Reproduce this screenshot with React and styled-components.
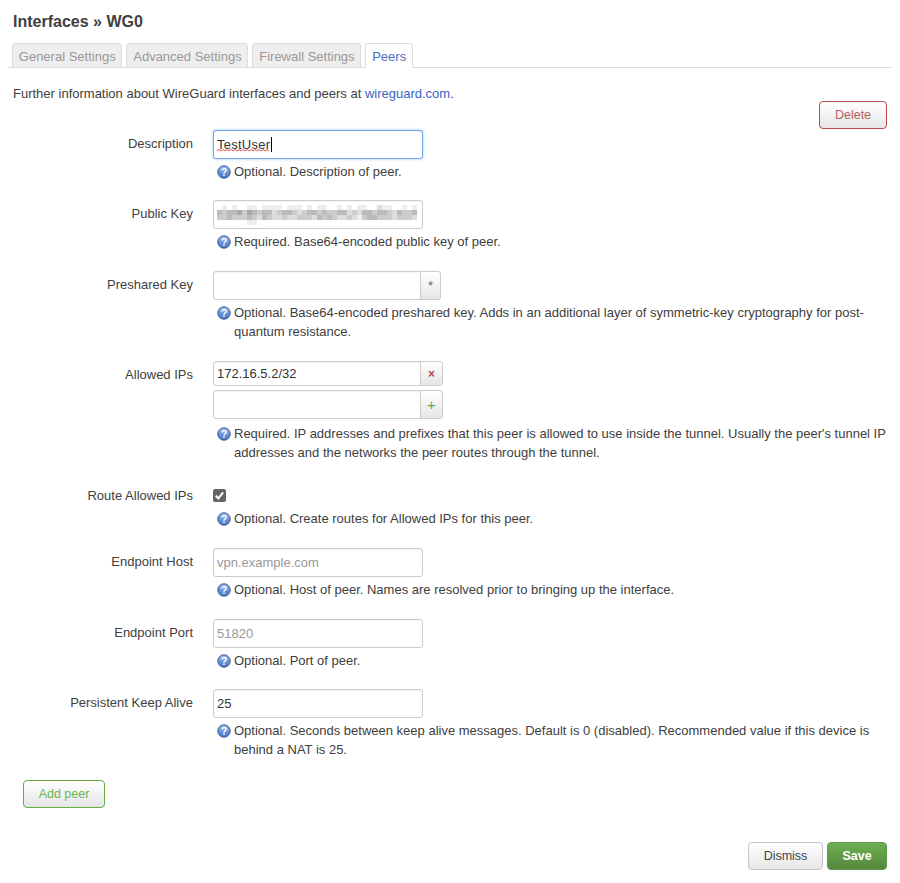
import React from "react";
import styled, { createGlobalStyle } from "styled-components";

const GlobalStyle = createGlobalStyle`
  html, body {
    margin: 0;
    padding: 0;
    background: #fff;
  }
  body {
    font-family: "Liberation Sans", Arial, sans-serif;
    font-size: 13px;
    color: #404040;
  }
`;

const Page = styled.div`
  width: 900px;
  height: 883px;
  box-sizing: border-box;
  padding: 13px 8px 0;
  overflow: hidden;
`;

const Title = styled.h2`
  margin: 0 0 13px 5px;
  font-size: 16px;
  line-height: 17px;
  font-weight: bold;
  color: #404040;
`;

const Tabs = styled.ul`
  display: flex;
  gap: 4px;
  list-style: none;
  margin: 0 0 17px;
  padding: 0 0 0 4px;
  height: 24px;
  border-bottom: 1px solid #ddd;
`;

const Tab = styled.li`
  box-sizing: border-box;
  height: 25px;
  padding: 0 5.8px;
  line-height: 25px;
  border: 1px solid #ddd;
  border-bottom-color: ${(p) => (p.$active ? "#fff" : "#ddd")};
  border-radius: 3px 3px 0 0;
  background: ${(p) => (p.$active ? "#fff" : "#eee")};
  color: ${(p) => (p.$active ? "#4a6fc3" : "#999")};
`;

const Intro = styled.p`
  margin: 0 0 0 5px;
  line-height: 17px;
`;

const Link = styled.a`
  color: #3a62c4;
  text-decoration: none;
`;

const DeleteRow = styled.div`
  display: flex;
  justify-content: flex-end;
  margin: -1px 5px 1px 0;
`;

const Button = styled.button`
  box-sizing: border-box;
  height: 28px;
  padding: 0;
  border-radius: 4px;
  font: 12.5px "Liberation Sans", Arial, sans-serif;
  background: linear-gradient(#fff, #e6e6e6);
  border: 1px solid #c4c4c4;
  color: #444;
`;

const DeleteButton = styled(Button)`
  width: 68px;
  border-color: #b94a48;
  color: #b9605e;
`;

const AddButton = styled(Button)`
  width: 82px;
  border-color: #62ad45;
  color: #6cb350;
`;

const SaveButton = styled(Button)`
  width: 60px;
  font-weight: bold;
  border-color: #5b9a48;
  background: linear-gradient(#6eae50, #55883f);
  color: #fff;
`;

const DismissButton = styled(Button)`
  width: 75px;
`;

const Form = styled.div`
  display: flex;
  flex-direction: column;
`;

const Row = styled.div`
  display: grid;
  grid-template-columns: 185px 1fr;
  column-gap: 20px;
  min-height: ${(p) => p.$height}px;
`;

const Label = styled.label`
  text-align: right;
  line-height: 28.5px;
  color: #404040;
`;

const Field = styled.div`
  display: flex;
  flex-direction: column;
  min-width: 0;
`;

const InputGroup = styled.div`
  position: relative;
  display: flex;
  width: ${(p) => (p.$wide ? 230 : p.$medium ? 228 : 210)}px;
  height: ${(p) => (p.$short ? 25 : 29)}px;
  margin-bottom: ${(p) => p.$after || 0}px;
`;

const Input = styled.input`
  box-sizing: border-box;
  flex: 1;
  min-width: 0;
  height: 100%;
  padding: 0 3px;
  font: 13px "Liberation Sans", Arial, sans-serif;
  color: #333;
  background: #fff;
  border: 1px solid #ccc;
  border-radius: ${(p) => (p.$joined ? "3px 0 0 3px" : "3px")};
  box-shadow: inset 0 1px 1px rgba(0, 0, 0, 0.05);
  outline: none;

  &::placeholder {
    color: #999;
    opacity: 1;
  }
`;

const FocusInput = styled(Input)`
  border-color: rgba(82, 148, 236, 0.8);
  box-shadow: inset 0 1px 1px rgba(0, 0, 0, 0.05), 0 0 3px rgba(82, 168, 236, 0.6);
  letter-spacing: 0.25px;
`;

const Caret = styled.span`
  position: absolute;
  left: 58px;
  top: 7px;
  width: 1px;
  height: 15px;
  background: #000;
`;

const Squiggle = styled.svg`
  position: absolute;
  left: 4px;
  top: 19px;
`;

const Addon = styled.span`
  box-sizing: border-box;
  width: ${(p) => p.$width || 21}px;
  height: 100%;
  margin-left: -1px;
  display: flex;
  align-items: center;
  justify-content: center;
  border: 1px solid #ccc;
  border-radius: 0 3px 3px 0;
  background: linear-gradient(#fff, #e6e6e6);
  font-size: ${(p) => p.$size || 13}px;
  font-weight: ${(p) => p.$weight || "normal"};
  color: ${(p) => p.$color || "#666"};
`;

const BlurredKey = styled.svg`
  position: absolute;
  left: 4px;
  top: 5px;
`;

const CheckWrap = styled.div`
  box-sizing: border-box;
  height: 24px;
  padding-top: 7px;
`;

const Checkbox = styled.svg`
  display: block;
`;

const Hint = styled.div`
  display: flex;
  align-items: flex-start;
  gap: 3px;
  padding: 4px 0 0 4px;
  width: 674px;
  line-height: 18.5px;
  font-size: 13px;
  color: #404040;
`;

const HintIcon = styled.svg`
  flex: none;
  margin-top: 2px;
`;

const HintText = styled.span`
  flex: 1;
`;

const AddRow = styled.div`
  padding-left: 15px;
`;

const Footer = styled.div`
  display: flex;
  justify-content: flex-end;
  gap: 4px;
  margin: 34px 5px 0 0;
`;

// blurred public key, one hex grey per 5px cell
const MOSAIC = [
  "fefeffeefeeeefeeefefeeffefefeeffdeeffefe",
  "bcbbacabcbbdcbbcdcbbcbccbbdcdbbcbbcdbccb",
  "ccbcccbcdbcddcddcccdbcbcddcdecbbcccdcccd",
  "ffffffeeffffffffffffffffffffffffffffffff",
];

const HelpIcon = () => (
  <HintIcon width="14" height="14" viewBox="0 0 14 14">
    <defs>
      <linearGradient id="helpFill" x1="0" y1="0" x2="0" y2="1">
        <stop offset="0" stopColor="#9cc0f0" />
        <stop offset="1" stopColor="#3f73c8" />
      </linearGradient>
    </defs>
    <circle cx="7" cy="7" r="6.2" fill="url(#helpFill)" stroke="#33558f" />
    <text x="7" y="10.5" textAnchor="middle" fontSize="10" fontWeight="bold" fill="#fff" fontFamily="Liberation Sans">
      ?
    </text>
  </HintIcon>
);

const Help = ({ children }) => (
  <Hint>
    <HelpIcon />
    <HintText>{children}</HintText>
  </Hint>
);

const App = () => (
  <Page>
    <GlobalStyle />
    <Title>Interfaces » WG0</Title>
    <Tabs>
      <Tab>General Settings</Tab>
      <Tab>Advanced Settings</Tab>
      <Tab>Firewall Settings</Tab>
      <Tab $active>Peers</Tab>
    </Tabs>
    <Intro>
      Further information about WireGuard interfaces and peers at <Link>wireguard.com</Link>.
    </Intro>
    <DeleteRow>
      <DeleteButton>Delete</DeleteButton>
    </DeleteRow>
    <Form>
      <Row $height={70}>
        <Label>Description</Label>
        <Field>
          <InputGroup>
            <FocusInput defaultValue="TestUser" spellCheck={false} />
            <Caret />
            <Squiggle width="52" height="3" viewBox="0 0 52 3">
              <path
                d="M0 2 L2 0.5 L4 2 L6 0.5 L8 2 L10 0.5 L12 2 L14 0.5 L16 2 L18 0.5 L20 2 L22 0.5 L24 2 L26 0.5 L28 2 L30 0.5 L32 2 L34 0.5 L36 2 L38 0.5 L40 2 L42 0.5 L44 2 L46 0.5 L48 2 L50 0.5 L52 2"
                fill="none"
                stroke="#d9483b"
                strokeWidth="0.9"
              />
            </Squiggle>
          </InputGroup>
          <Help>Optional. Description of peer.</Help>
        </Field>
      </Row>
      <Row $height={71}>
        <Label>Public Key</Label>
        <Field>
          <InputGroup>
            <Input />
            <BlurredKey width="200" height="20" viewBox="0 0 200 20">
              {MOSAIC.map((line, y) =>
                line.split("").map((c, x) => (
                  <rect key={`${x}-${y}`} x={x * 5} y={y * 5} width="5" height="5" fill={`#${c}${c}${c}${c}${c}${c}`} />
                ))
              )}
            </BlurredKey>
          </InputGroup>
          <Help>Required. Base64-encoded public key of peer.</Help>
        </Field>
      </Row>
      <Row $height={90}>
        <Label>Preshared Key</Label>
        <Field>
          <InputGroup $medium>
            <Input $joined />
            <Addon>*</Addon>
          </InputGroup>
          <Help>
            Optional. Base64-encoded preshared key. Adds in an additional layer of symmetric-key cryptography for
            post-quantum resistance.
          </Help>
        </Field>
      </Row>
      <Row $height={121}>
        <Label>Allowed IPs</Label>
        <Field>
          <InputGroup $wide $short $after={4}>
            <Input $joined defaultValue="172.16.5.2/32" />
            <Addon $width={23} $color="#b94a48" $weight="bold" $size={12}>×</Addon>
          </InputGroup>
          <InputGroup $wide $after={2}>
            <Input $joined />
            <Addon $width={23} $color="#62ad45" $size={15}>+</Addon>
          </InputGroup>
          <Help>
            Required. IP addresses and prefixes that this peer is allowed to use inside the tunnel. Usually the peer's
            tunnel IP addresses and the networks the peer routes through the tunnel.
          </Help>
        </Field>
      </Row>
      <Row $height={66}>
        <Label>Route Allowed IPs</Label>
        <Field>
          <CheckWrap>
            <Checkbox width="13" height="13" viewBox="0 0 13 13">
              <rect width="13" height="13" rx="2" fill="#666" />
              <path d="M2.8 6.8 5.3 9.4 10.2 3.4" fill="none" stroke="#fff" strokeWidth="2" />
            </Checkbox>
          </CheckWrap>
          <Help>Optional. Create routes for Allowed IPs for this peer.</Help>
        </Field>
      </Row>
      <Row $height={71}>
        <Label>Endpoint Host</Label>
        <Field>
          <InputGroup>
            <Input placeholder="vpn.example.com" />
          </InputGroup>
          <Help>Optional. Host of peer. Names are resolved prior to bringing up the interface.</Help>
        </Field>
      </Row>
      <Row $height={70}>
        <Label>Endpoint Port</Label>
        <Field>
          <InputGroup>
            <Input placeholder="51820" />
          </InputGroup>
          <Help>Optional. Port of peer.</Help>
        </Field>
      </Row>
      <Row $height={91}>
        <Label>Persistent Keep Alive</Label>
        <Field>
          <InputGroup>
            <Input defaultValue="25" />
          </InputGroup>
          <Help>
            Optional. Seconds between keep alive messages. Default is 0 (disabled). Recommended value if this device is
            behind a NAT is 25.
          </Help>
        </Field>
      </Row>
    </Form>
    <AddRow>
      <AddButton>Add peer</AddButton>
    </AddRow>
    <Footer>
      <DismissButton>Dismiss</DismissButton>
      <SaveButton>Save</SaveButton>
    </Footer>
  </Page>
);

export default App;
